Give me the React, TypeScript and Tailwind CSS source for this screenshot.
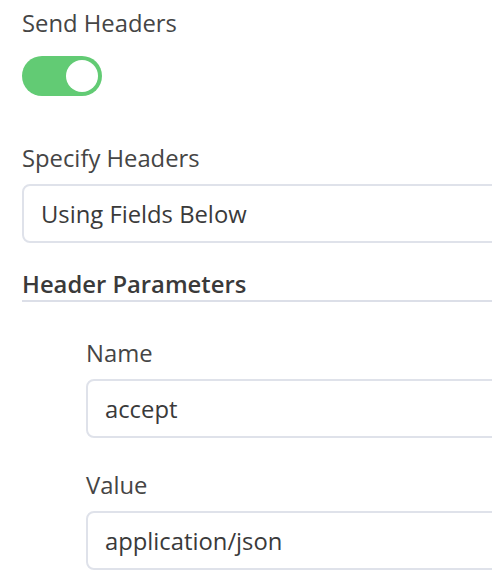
import React from 'react';

const font = { fontFamily: '"Open Sans", "Noto Sans", sans-serif' };

const Field: React.FC<{ label: string; value: string; top: string }> = ({ label, value, top }) => (
  <div className={top}>
    <div className="text-[23.8px] leading-[32px] text-[#454545]">{label}</div>
    <div className="mt-[10px] h-[59px] w-[560px] rounded-[8px] border-2 border-[#dfe2ea] bg-white flex items-center pl-[17px]">
      <span className="text-[23.8px] leading-[32px] text-[#3a3a3a]">{value}</span>
    </div>
  </div>
);

const App: React.FC = () => {
  return (
    <div className="w-[492px] h-[588px] overflow-hidden bg-white" style={font}>
      <div className="pl-[22px] pt-[7px] w-[620px]">
        <div className="text-[23.8px] leading-[32px] text-[#454545]">Send Headers</div>
        {/* toggle, switched on */}
        <div className="mt-[17px] w-[80px] h-[40px] rounded-full bg-[#62cb74] flex items-center justify-end pr-[4px]">
          <div className="w-[32px] h-[32px] rounded-full bg-white" />
        </div>

        <Field label="Specify Headers" value="Using Fields Below" top="mt-[46px]" />

        <div className="mt-[25px] text-[23.8px] leading-[32px] font-semibold text-[#3a3a3a] border-b-2 border-[#dcdfe8]">
          Header Parameters
        </div>

        <div className="pl-[64px]">
          <Field label="Name" value="accept" top="mt-[35px]" />
          <Field label="Value" value="application/json" top="mt-[31px]" />
        </div>
      </div>
    </div>
  );
};

export default App;
